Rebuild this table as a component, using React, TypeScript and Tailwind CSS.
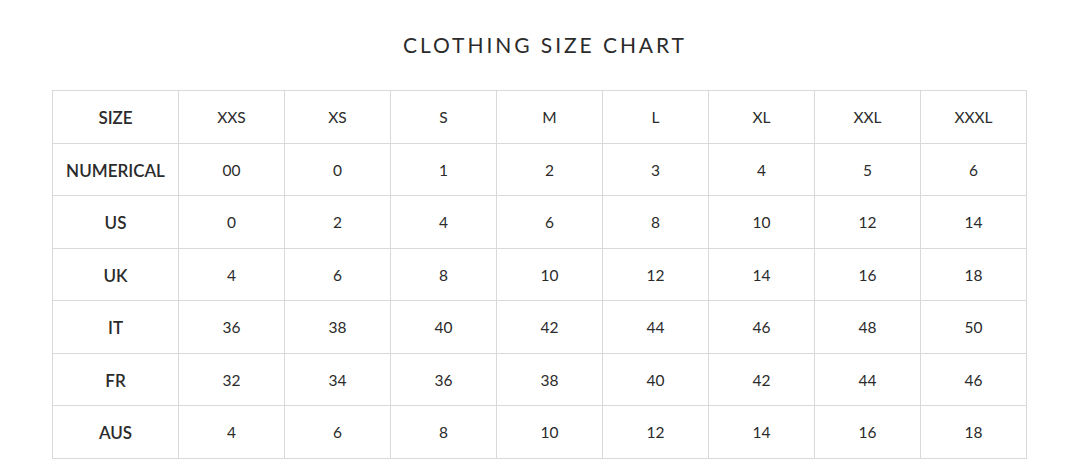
const sizes = ['XXS', 'XS', 'S', 'M', 'L', 'XL', 'XXL', 'XXXL'];

const rows: { label: string; values: string[] }[] = [
  { label: 'NUMERICAL', values: ['00', '0', '1', '2', '3', '4', '5', '6'] },
  { label: 'US', values: ['0', '2', '4', '6', '8', '10', '12', '14'] },
  { label: 'UK', values: ['4', '6', '8', '10', '12', '14', '16', '18'] },
  { label: 'IT', values: ['36', '38', '40', '42', '44', '46', '48', '50'] },
  { label: 'FR', values: ['32', '34', '36', '38', '40', '42', '44', '46'] },
  { label: 'AUS', values: ['4', '6', '8', '10', '12', '14', '16', '18'] },
];

export default function App() {
  return (
    <div className="h-[473px] w-[1080px] bg-white font-['Lato','Liberation_Sans',sans-serif] text-[#2b2b2b]">
      <h1 className="pt-[32px] text-center text-[21px] leading-[26px] tracking-[0.14em] pl-[10px]">
        CLOTHING SIZE CHART
      </h1>
      <div className="mt-[32px] flex justify-center pr-[1px]">
        <table className="border-collapse">
          <thead>
            <tr>
              <th className="h-[52.5px] w-[126px] border-[1.5px] border-[#d9d9d9] pt-[2px] text-[17px] font-semibold">SIZE</th>
              {sizes.map((s) => (
                <td key={s} className="h-[52.5px] w-[106px] border-[1.5px] border-[#d9d9d9] pt-[2px] text-center text-[15.5px]">
                  {s}
                </td>
              ))}
            </tr>
          </thead>
          <tbody>
            {rows.map((row) => (
              <tr key={row.label}>
                <th className="h-[52.5px] border-[1.5px] border-[#d9d9d9] pt-[2px] text-[17px] font-semibold">{row.label}</th>
                {row.values.map((v, i) => (
                  <td key={i} className="h-[52.5px] border-[1.5px] border-[#d9d9d9] pt-[2px] text-center text-[15.5px]">
                    {v}
                  </td>
                ))}
              </tr>
            ))}
          </tbody>
        </table>
      </div>
    </div>
  );
}
